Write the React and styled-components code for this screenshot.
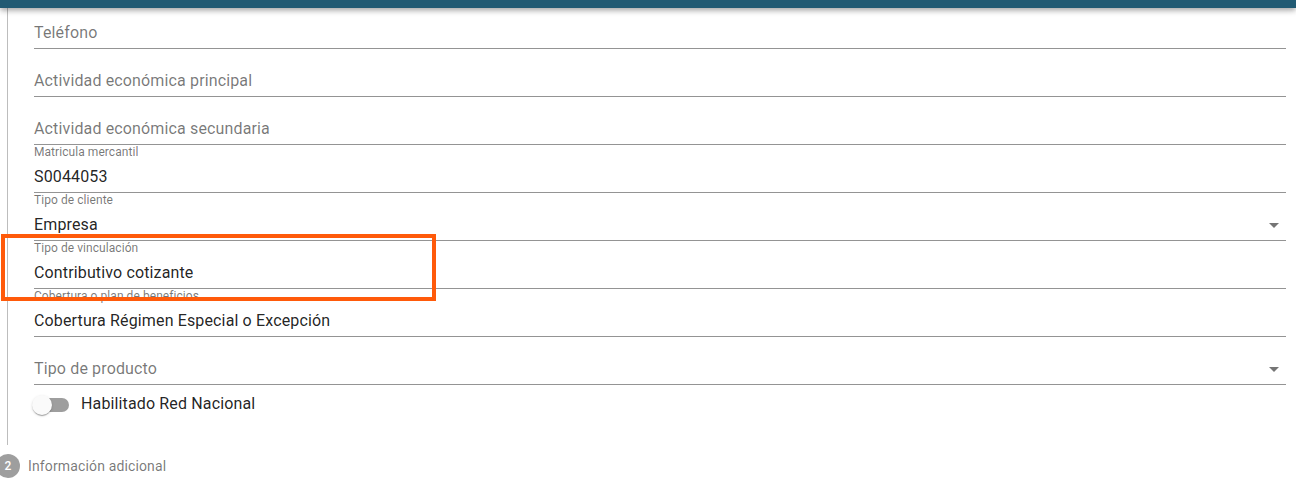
import React from "react";
import styled, { createGlobalStyle } from "styled-components";

const GlobalStyle = createGlobalStyle`
  html, body {
    margin: 0;
    padding: 0;
    background: #ffffff;
    overflow: hidden;
  }
  body {
    font-family: Roboto, "Noto Sans", "Liberation Sans", sans-serif;
    -webkit-font-smoothing: antialiased;
  }
  * { box-sizing: border-box; }
`;

const Page = styled.div`
  position: relative;
  width: 1296px;
  height: 485px;
  overflow: hidden;
  background: #fff;
`;

const AppBar = styled.header`
  position: fixed;
  top: 0;
  left: 0;
  right: 0;
  height: 8px;
  background: #215a73;
  z-index: 5;
  box-shadow: 0 2px 4px -1px rgba(0, 0, 0, 0.2), 0 4px 5px 0 rgba(0, 0, 0, 0.14),
    0 1px 10px 0 rgba(0, 0, 0, 0.12);
`;

const Stepper = styled.div`
  display: flex;
  flex-direction: column;
  margin-left: -4px;
`;

const StepContent = styled.div`
  margin-left: 11px;
  border-left: 1px solid #bdbdbd;
  padding: 1px 10px 21px 26px;
  display: flex;
  flex-direction: column;
`;

const FieldBox = styled.div`
  display: flex;
  flex-direction: column;
  height: 48px;
`;

const LabelArea = styled.div`
  height: 16px;
  font-size: 12px;
  line-height: 14px;
  letter-spacing: 0.06px;
  color: rgba(0, 0, 0, 0.54);
  white-space: nowrap;
  overflow: visible;
`;

const InputRow = styled.div`
  display: flex;
  align-items: center;
  height: 32px;
  padding: 6px 0 6px;
  border-bottom: 1px solid rgba(0, 0, 0, 0.42);
  font-size: 16px;
  line-height: 19px;
  letter-spacing: 0.14px;
  color: ${(p) => (p.$placeholder ? "rgba(0, 0, 0, 0.54)" : "rgba(0, 0, 0, 0.87)")};
`;

const InputText = styled.span`
  flex: 1;
  white-space: nowrap;
`;

const Arrow = styled.svg`
  width: 24px;
  height: 24px;
  flex: none;
  fill: rgba(0, 0, 0, 0.54);
`;

function Field({ label, value, select }) {
  const filled = value !== undefined && value !== "";
  return (
    <FieldBox>
      <LabelArea>{filled ? label : ""}</LabelArea>
      <InputRow $placeholder={!filled}>
        <InputText>{filled ? value : label}</InputText>
        {select && (
          <Arrow viewBox="0 0 24 24" aria-hidden="true">
            <path d="M7 10l5 5 5-5z" />
          </Arrow>
        )}
      </InputRow>
    </FieldBox>
  );
}

const SwitchRow = styled.label`
  display: flex;
  align-items: center;
  margin: 1px 0 0 -11px;
  height: 38px;
`;

const SwitchRoot = styled.span`
  position: relative;
  display: inline-flex;
  width: 58px;
  height: 38px;
  padding: 12px;
  flex: none;
`;

const Track = styled.span`
  width: 34px;
  height: 14px;
  border-radius: 7px;
  background: #000;
  opacity: 0.38;
`;

const Thumb = styled.span`
  position: absolute;
  top: 9px;
  left: 9px;
  width: 20px;
  height: 20px;
  border-radius: 50%;
  background: #fafafa;
  box-shadow: 0 2px 1px -1px rgba(0, 0, 0, 0.2), 0 1px 1px 0 rgba(0, 0, 0, 0.14),
    0 1px 3px 0 rgba(0, 0, 0, 0.12);
`;

const SwitchText = styled.span`
  font-size: 16px;
  line-height: 24px;
  letter-spacing: 0.14px;
  padding-bottom: 3px;
  color: rgba(0, 0, 0, 0.87);
`;

const StepHeader = styled.div`
  display: flex;
  align-items: center;
  gap: 8px;
  padding-top: 9px;
`;

const StepIcon = styled.span`
  width: 24px;
  height: 24px;
  border-radius: 50%;
  background: rgba(0, 0, 0, 0.38);
  color: #fff;
  font-size: 12px;
  font-weight: 500;
  line-height: 24px;
  text-align: center;
  flex: none;
`;

const StepLabelText = styled.span`
  font-size: 14px;
  line-height: 20px;
  letter-spacing: 0.14px;
  color: rgba(0, 0, 0, 0.54);
`;

const Highlight = styled.div`
  position: absolute;
  left: 1px;
  top: 234px;
  width: 435px;
  height: 67px;
  border: 4px solid #ff5a0a;
  pointer-events: none;
  z-index: 2;
`;

const fields = [
  { label: "Teléfono" },
  { label: "Actividad económica principal" },
  { label: "Actividad económica secundaria" },
  { label: "Matricula mercantil", value: "S0044053" },
  { label: "Tipo de cliente", value: "Empresa", select: true },
  { label: "Tipo de vinculación", value: "Contributivo cotizante" },
  { label: "Cobertura o plan de beneficios", value: "Cobertura Régimen Especial o Excepción" },
  { label: "Tipo de producto", select: true },
];

export default function App() {
  return (
    <>
      <GlobalStyle />
      <Page>
        <AppBar />
        <Stepper>
          <StepContent>
            {fields.map((f) => (
              <Field key={f.label} {...f} />
            ))}
            <SwitchRow>
              <SwitchRoot>
                <Track />
                <Thumb />
              </SwitchRoot>
              <SwitchText>Habilitado Red Nacional</SwitchText>
            </SwitchRow>
          </StepContent>
          <StepHeader>
            <StepIcon>2</StepIcon>
            <StepLabelText>Información adicional</StepLabelText>
          </StepHeader>
        </Stepper>
        <Highlight />
      </Page>
    </>
  );
}
